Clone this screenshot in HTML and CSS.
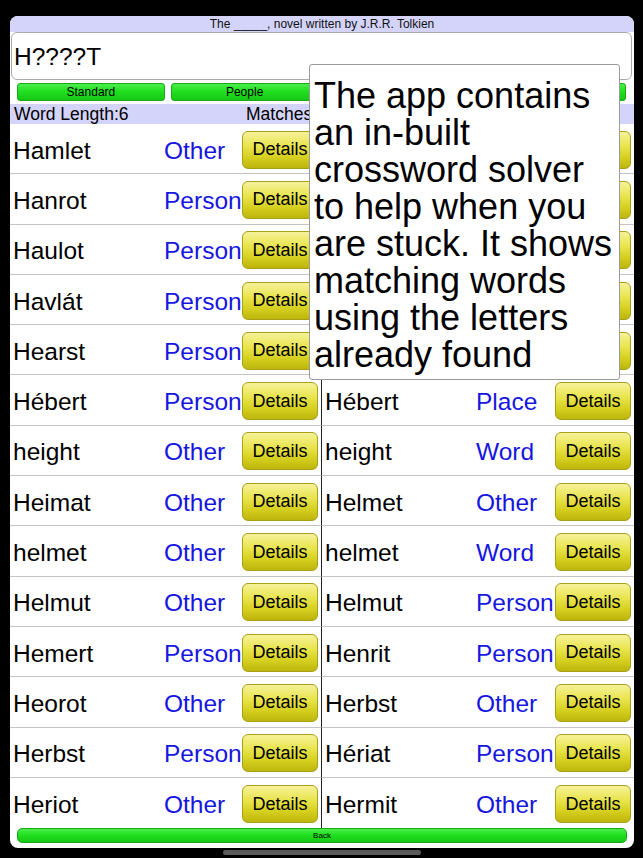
FILE: index.html
```html
<!DOCTYPE html>
<html lang="en">
<head>
    <meta charset="UTF-8">
    <meta name="viewport" content="width=device-width, initial-scale=1.0">
    <title>Crossword Solver</title>
    <link rel="stylesheet" href="styles.css">
</head>
<body>
    <div class="screen">
        <div class="clue">The _____, novel written by J.R.R. Tolkien</div>
        <div class="entry">H????T</div>

        <div class="modes">
            <button class="mode">Standard</button>
            <button class="mode">People</button>
            <button class="mode">Places</button>
            <button class="mode">Words</button>
        </div>

        <div class="info">
            <span class="length">Word Length:6</span>
            <span>Matches:28</span>
        </div>

        <div class="list">
            <div class="cell"><span class="word">Hamlet</span><span class="cat">Other</span><button class="details">Details</button></div>
            <div class="cell"><span class="word">Hamlet</span><span class="cat">Word</span><button class="details">Details</button></div>
            <div class="cell"><span class="word">Hanrot</span><span class="cat">Person</span><button class="details">Details</button></div>
            <div class="cell"><span class="word">Harlot</span><span class="cat">Word</span><button class="details">Details</button></div>
            <div class="cell"><span class="word">Haulot</span><span class="cat">Person</span><button class="details">Details</button></div>
            <div class="cell"><span class="word">Haslet</span><span class="cat">Word</span><button class="details">Details</button></div>
            <div class="cell"><span class="word">Havlát</span><span class="cat">Person</span><button class="details">Details</button></div>
            <div class="cell"><span class="word">Hazlet</span><span class="cat">Person</span><button class="details">Details</button></div>
            <div class="cell"><span class="word">Hearst</span><span class="cat">Person</span><button class="details">Details</button></div>
            <div class="cell"><span class="word">Hearst</span><span class="cat">Place</span><button class="details">Details</button></div>
            <div class="cell"><span class="word">Hébert</span><span class="cat">Person</span><button class="details">Details</button></div>
            <div class="cell"><span class="word">Hébert</span><span class="cat">Place</span><button class="details">Details</button></div>
            <div class="cell"><span class="word">height</span><span class="cat">Other</span><button class="details">Details</button></div>
            <div class="cell"><span class="word">height</span><span class="cat">Word</span><button class="details">Details</button></div>
            <div class="cell"><span class="word">Heimat</span><span class="cat">Other</span><button class="details">Details</button></div>
            <div class="cell"><span class="word">Helmet</span><span class="cat">Other</span><button class="details">Details</button></div>
            <div class="cell"><span class="word">helmet</span><span class="cat">Other</span><button class="details">Details</button></div>
            <div class="cell"><span class="word">helmet</span><span class="cat">Word</span><button class="details">Details</button></div>
            <div class="cell"><span class="word">Helmut</span><span class="cat">Other</span><button class="details">Details</button></div>
            <div class="cell"><span class="word">Helmut</span><span class="cat">Person</span><button class="details">Details</button></div>
            <div class="cell"><span class="word">Hemert</span><span class="cat">Person</span><button class="details">Details</button></div>
            <div class="cell"><span class="word">Henrit</span><span class="cat">Person</span><button class="details">Details</button></div>
            <div class="cell"><span class="word">Heorot</span><span class="cat">Other</span><button class="details">Details</button></div>
            <div class="cell"><span class="word">Herbst</span><span class="cat">Other</span><button class="details">Details</button></div>
            <div class="cell"><span class="word">Herbst</span><span class="cat">Person</span><button class="details">Details</button></div>
            <div class="cell"><span class="word">Hériat</span><span class="cat">Person</span><button class="details">Details</button></div>
            <div class="cell"><span class="word">Heriot</span><span class="cat">Other</span><button class="details">Details</button></div>
            <div class="cell"><span class="word">Hermit</span><span class="cat">Other</span><button class="details">Details</button></div>
        </div>

        <button class="back">Back</button>

        <!-- help note shown over the list -->
        <div class="note">The app contains an in-built crossword solver to help when you are stuck. It shows matching words using the letters already found</div>
    </div>
    <div class="home-bar"></div>
</body>
</html>
```

FILE: styles.css
```css
body {
    margin: 0;
    background-color: #000;
    font-family: "Liberation Sans", Arial, sans-serif;
    width: 643px;
    height: 858px;
    overflow: hidden;
}
.screen {
    position: relative;
    width: 624px;
    height: 832px;
    margin: 16px 9px 0 10px;
    background-color: #fff;
    border-radius: 8px;
    overflow: hidden;
    display: flex;
    flex-direction: column;
}
.clue {
    height: 16px;
    line-height: 16px;
    background-color: #d4d4fa;
    font-size: 12px;
    text-align: center;
    color: #111;
}
.entry {
    height: 46px;
    margin: 0 2px 0 1px;
    padding: 2px 0 0 2px;
    box-sizing: content-box;
    height: 44px;
    border: 1px solid #aaa;
    border-radius: 6px;
    display: flex;
    align-items: center;
    font-size: 24.5px;
    color: #000;
}
.modes {
    display: flex;
    gap: 6px;
    padding: 3px 8px 0 7px;
}
.mode {
    flex: 1;
    height: 18px;
    padding: 0;
    border: 1px solid #17a817;
    border-radius: 3px;
    background: linear-gradient(#4cee4c, #20e020 45%, #17c817);
    font-family: inherit;
    font-size: 12px;
    color: #000;
}
.info {
    display: flex;
    height: 20px;
    line-height: 21px;
    margin-top: 3px;
    background-color: #d4d4fa;
    font-size: 17.5px;
}
.length {
    width: 232px;
    padding-left: 4px;
}
.list {
    display: grid;
    grid-template-columns: 1fr 1fr;
    grid-auto-rows: 50.3px;
}
.cell {
    display: flex;
    align-items: center;
    box-sizing: border-box;
    padding-top: 2px;
    border-bottom: 1px solid #c4c4c4;
    font-size: 24.5px;
}
.cell:nth-child(odd) {
    border-right: 1px solid #222;
}
.cell:nth-last-child(-n+2) {
    border-bottom: none;
}
.word {
    width: 151px;
    padding-left: 3px;
    padding-top: 2px;
    color: #000;
}
.cat {
    flex: 1;
    padding-top: 2px;
    color: #1616e0;
    white-space: nowrap;
}
.details {
    width: 76px;
    height: 38px;
    margin-right: 3px;
    padding: 0;
    border: 1px solid #a8a018;
    border-radius: 6px;
    background: linear-gradient(#f6f29a, #e8e44c 40%, #d6d020 70%, #bdb50c);
    font-family: inherit;
    font-size: 18px;
    color: #000;
}
.back {
    height: 15px;
    margin: 0 7px 0 7px;
    padding: 0;
    border: 1px solid #17a817;
    border-radius: 5px;
    background: linear-gradient(#4cee4c, #20e020 45%, #17c817);
    font-family: inherit;
    font-size: 8px;
    color: #000;
}
.note {
    position: absolute;
    left: 299px;
    top: 48px;
    width: 301px;
    height: 292px;
    padding: 12px 4px 10px;
    background-color: #fff;
    border: 1px solid #9a9a9a;
    border-radius: 3px;
    font-size: 36px;
    line-height: 37px;
    color: #000;
}
.home-bar {
    width: 198px;
    height: 5px;
    margin: 2px auto 0;
    border-radius: 3px;
    background-color: #5a5a5a;
}
```
